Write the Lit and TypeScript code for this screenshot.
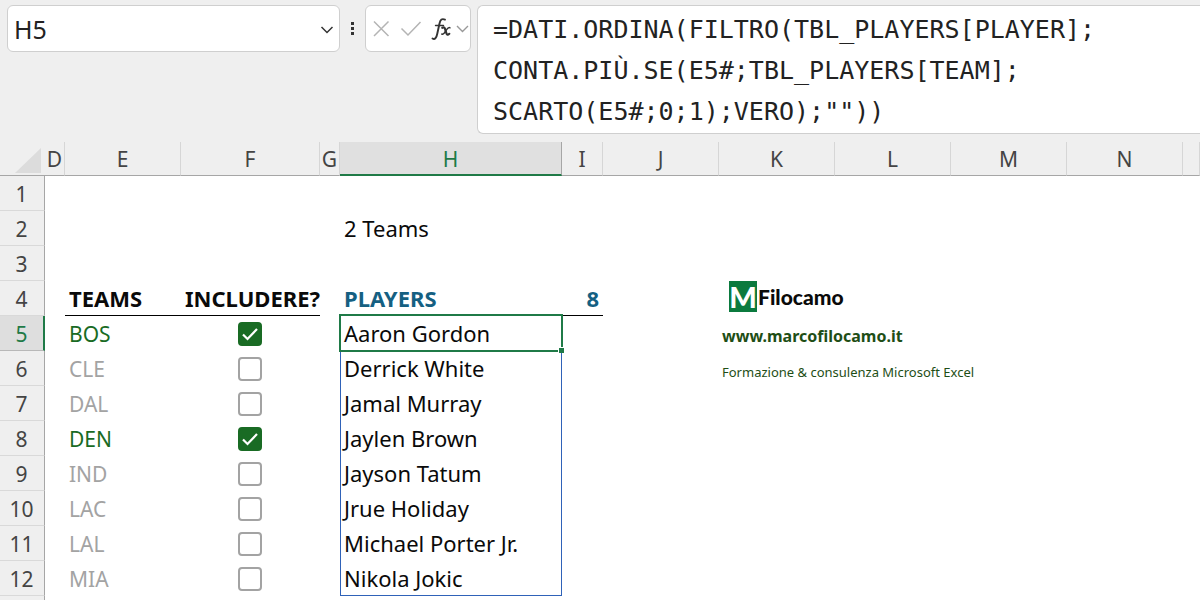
import { LitElement, html, css, nothing } from "lit";
import { customElement, state } from "lit/decorators.js";

interface Team {
  code: string;
  included: boolean;
}

const COLUMNS = ["D", "E", "F", "G", "H", "I", "J", "K", "L", "M", "N", ""];
const ROWS = [1, 2, 3, 4, 5, 6, 7, 8, 9, 10, 11, 12];
const FIRST_DATA_ROW = 5;

const PLAYERS = [
  "Aaron Gordon",
  "Derrick White",
  "Jamal Murray",
  "Jaylen Brown",
  "Jayson Tatum",
  "Jrue Holiday",
  "Michael Porter Jr.",
  "Nikola Jokic",
];

const FORMULA = `=DATI.ORDINA(FILTRO(TBL_PLAYERS[PLAYER];
CONTA.PIÙ.SE(E5#;TBL_PLAYERS[TEAM];
SCARTO(E5#;0;1);VERO);""))`;

@customElement("formula-bar")
class FormulaBar extends LitElement {
  static styles = css`
    :host {
      display: flex;
      align-items: flex-start;
      padding: 5px 0 8px 7px;
      background: #efefef;
      color: #222;
    }
    .box {
      display: flex;
      align-items: center;
      box-sizing: border-box;
      height: 47px;
      background: #fff;
      border: 1px solid #cfcfcf;
      border-radius: 6px;
    }
    .name {
      flex: 0 0 333px;
      min-width: 0;
    }
    .name-input {
      flex: 1;
      min-width: 0;
      padding: 0 0 0 6px;
      border: 0;
      outline: 0;
      background: none;
      color: inherit;
      font: 25px/32px "Noto Sans", sans-serif;
    }
    button {
      display: flex;
      padding: 0;
      border: 0;
      background: none;
    }
    .name button {
      padding: 0 4px;
    }
    .grip {
      flex: none;
      margin: 17px 10px 0;
    }
    .actions {
      flex: none;
      margin-right: 6px;
    }
    .formula {
      flex: 1;
      min-width: 0;
      box-sizing: border-box;
      height: 129px;
      padding: 3px 0 0 15px;
      border: 1px solid #cfcfcf;
      border-right: 0;
      border-radius: 6px 0 0 6px;
      outline: 0;
      resize: none;
      overflow: hidden;
      background: #fff;
      color: #222;
      white-space: pre;
      font: 25px/41px "DejaVu Sans Mono", monospace;
    }
  `;

  render() {
    return html`
      <div class="box name">
        <input class="name-input" aria-label="Casella nome" value="H5" />
        <button aria-label="Apri elenco nomi">
          <svg width="16" height="16" viewBox="0 0 16 16" fill="none" stroke="#333" stroke-width="1.5">
            <path d="M2.5 6 8 11.5 13.500 6" />
          </svg>
        </button>
      </div>
      <svg class="grip" width="5" height="16" viewBox="0 0 5 16" fill="#333">
        <path d="M1 0h3v3H1zM1 5h3v3H1zM1 10h3v3H1z" />
      </svg>
      <div class="box actions">
        <button aria-label="Annulla">
          <svg width="30" height="24" viewBox="0 0 30 24" fill="none" stroke="#b4b4b4" stroke-width="1.5">
            <path d="M8 4.500 22.500 19M22.500 4.500 8 19" />
          </svg>
        </button>
        <button aria-label="Invio">
          <svg width="30" height="24" viewBox="0 0 30 24" fill="none" stroke="#b4b4b4" stroke-width="1.5">
            <path d="M5.500 11.500 12 18 24.500 5" />
          </svg>
        </button>
        <button aria-label="Inserisci funzione">
          <svg width="28" height="26" viewBox="0 0 28 26" fill="none" stroke="#333" stroke-linecap="round">
            <path stroke-width="1.900" d="M6.500 22.500C9 24 10.500 21.500 11.200 18L13.500 7.500C14.300 3.500 16 2.300 19 3.600" />
            <path stroke-width="1.400" d="M9.500 9.500h8" />
            <path stroke-width="2.200" d="M16.300 11.800c2-1 2.600 0 3.200 2.700l.8 2.500c.6 2 1.500 2.200 3 .8" />
            <path stroke-width="1.500" d="M24 11.800c-1.500-.8-2.700.5-4.200 3s-2.500 4-4 3.200" />
          </svg>
        </button>
        <button aria-label="Altre funzioni">
          <svg width="16" height="16" viewBox="0 0 16 16" fill="none" stroke="#999" stroke-width="1.400">
            <path d="M3 5 8.500 10.500 14 5" />
          </svg>
        </button>
      </div>
      <textarea class="formula" aria-label="Barra della formula" spellcheck="false" .value=${FORMULA}></textarea>
    `;
  }
}

@customElement("brand-card")
class BrandCard extends LitElement {
  static styles = css`
    :host {
      display: flex;
      flex-direction: column;
      align-items: flex-start;
      gap: 10px;
      padding-left: 3px;
      color: #1e4e16;
      white-space: nowrap;
    }
    .logo {
      display: flex;
      align-items: center;
      gap: 1px;
      margin-left: 7px;
      color: #0a0a0a;
      font: 900 21px/31px Lato, sans-serif;
    }
    .mark {
      width: 28px;
      height: 31px;
      background: #0b7a3e;
      color: #fff;
      text-align: center;
      font-size: 29px;
    }
    .site {
      color: inherit;
      text-decoration: none;
      font: 700 16px/28px "Noto Sans", sans-serif;
    }
    .tagline {
      font: 13px/24px "Noto Sans", sans-serif;
    }
  `;

  render() {
    return html`
      <div class="logo"><span class="mark">M</span><span>Filocamo</span></div>
      <a class="site" href="#">www.marcofilocamo.it</a>
      <span class="tagline">Formazione &amp; consulenza Microsoft Excel</span>
    `;
  }
}

@customElement("sheet-grid")
class SheetGrid extends LitElement {
  static styles = css`
    :host {
      display: block;
      overflow: hidden;
    }
    table {
      width: 100%;
      table-layout: fixed;
      border-collapse: separate;
      border-spacing: 0;
      background: #fff;
      color: #0a0a0a;
      font: 22px/34px "Noto Sans", sans-serif;
    }
    th,
    td {
      box-sizing: border-box;
      height: 35px;
      padding: 0;
      text-align: left;
      white-space: nowrap;
    }
    .w-head { width: 45px; }
    .w-d { width: 20px; }
    .w-e { width: 116px; }
    .w-f { width: 139px; }
    .w-g { width: 20px; }
    .w-h { width: 222px; }
    .w-i { width: 41px; }
    .w-wide { width: 116px; }
    .col,
    .corner {
      height: 34px;
      background: #efefef;
      border-bottom: 1px solid #a6a6a6;
      line-height: 32px;
    }
    .col {
      border-right: 1px solid #d6d6d6;
      color: #444;
      text-align: center;
      font-size: 21px;
      font-weight: 400;
    }
    .col.active {
      padding-top: 2px;
      background: #e0e0e0;
      border-bottom: 2px solid #1f7a47;
      border-right-color: #a6a6a6;
      color: #1f7a47;
      line-height: 30px;
    }
    .triangle {
      display: block;
      margin: 4px 0 0 15px;
    }
    .row {
      padding: 2px 1px 0 0;
      background: #efefef;
      border-right: 1px solid #a6a6a6;
      border-bottom: 1px solid #d9d9d9;
      color: #444;
      text-align: center;
      font-size: 21px;
      font-weight: 400;
      line-height: 32px;
    }
    .row.active {
      background: #dedede;
      border-right: 2px solid #1f7a47;
      border-bottom-color: #b8b8b8;
      color: #1f7a47;
      padding-right: 0;
    }
    .text {
      padding-left: 4px;
    }
    .summary {
      padding-bottom: 1px;
    }
    .title {
      border-bottom: 1px solid #000;
      font-weight: 700;
    }
    .result {
      color: #156082;
    }
    .count {
      padding-right: 4px;
      text-align: right;
    }
    .team {
      color: #a3a3a3;
      font-size: 21px;
    }
    .team.on {
      color: #196b24;
    }
    .check {
      display: grid;
      place-content: center;
      padding-right: 2px;
    }
    .check > * {
      grid-area: 1 / 1;
    }
    input {
      appearance: none;
      box-sizing: border-box;
      width: 24px;
      height: 24px;
      margin: 0;
      border: 2px solid #a3a3a3;
      border-radius: 4px;
      background: #fff;
    }
    input:checked {
      border-color: #196b24;
      background: #196b24;
    }
    .check svg {
      pointer-events: none;
    }
    .spill {
      border-left: 1px solid #2f62b8;
      border-right: 1px solid #2f62b8;
      padding: 0 0 1px 3px;
    }
    .spill.last {
      border-bottom: 1px solid #2f62b8;
      padding-bottom: 0;
    }
    .selected {
      position: relative;
    }
    .cursor {
      position: absolute;
      inset: -2px -2px -1px;
      border: 2px solid #1f7a47;
      pointer-events: none;
    }
    .handle {
      position: absolute;
      right: -3px;
      bottom: -3px;
      width: 5px;
      height: 5px;
      border: 1px solid #fff;
      border-width: 1px 0 0 1px;
      background: #1f7a47;
    }
    .brand {
      vertical-align: top;
    }
  `;

  @state() private teams: Team[] = ["BOS", "CLE", "DAL", "DEN", "IND", "LAC", "LAL", "MIA"].map((code) => ({
    code,
    included: code === "BOS" || code === "DEN",
  }));

  private toggle(index: number) {
    this.teams = this.teams.map((t, i) => (i === index ? { ...t, included: !t.included } : t));
  }

  private renderTitles() {
    return html`
      <td></td>
      <td class="text title">TEAMS</td>
      <td class="text title">INCLUDERE?</td>
      <td></td>
      <td class="text title result">PLAYERS</td>
      <td class="title result count">${PLAYERS.length}</td>
      <td></td>
      <td class="brand" colspan="3" rowspan="3"><brand-card></brand-card></td>
      <td colspan="2"></td>
    `;
  }

  private renderData(index: number) {
    const team = this.teams[index];
    const first = index === 0;
    const last = index === PLAYERS.length - 1;
    return html`
      <td></td>
      <td class="text team ${team.included ? "on" : ""}">${team.code}</td>
      <td>
        <label class="check">
          <input
            type="checkbox"
            aria-label="Includere ${team.code}"
            .checked=${team.included}
            @change=${() => this.toggle(index)}
          />
          ${team.included
            ? html`<svg width="24" height="24" viewBox="0 0 24 24" fill="none" stroke="#fff" stroke-width="2.200">
                <path d="M5 12.500 9.500 17 19 7" />
              </svg>`
            : nothing}
        </label>
      </td>
      <td></td>
      <td class="spill ${first ? "selected" : ""} ${last ? "last" : ""}">
        ${PLAYERS[index]}${first ? html`<div class="cursor"><div class="handle"></div></div>` : nothing}
      </td>
      <td colspan="2"></td>
      ${index < 2 ? nothing : html`<td colspan="3"></td>`}
      <td colspan="2"></td>
    `;
  }

  private renderCells(row: number) {
    if (row === 2) {
      return html`<td colspan="4"></td><td class="text summary">${this.teams.filter((t) => t.included).length} Teams</td><td colspan="7"></td>`;
    }
    if (row === FIRST_DATA_ROW - 1) return this.renderTitles();
    const index = row - FIRST_DATA_ROW;
    if (index >= 0 && index < this.teams.length) return this.renderData(index);
    return html`<td colspan="12"></td>`;
  }

  render() {
    return html`
      <table>
        <colgroup>
          <col class="w-head" /><col class="w-d" /><col class="w-e" /><col class="w-f" /><col class="w-g" />
          <col class="w-h" /><col class="w-i" /><col class="w-wide" span="5" /><col />
        </colgroup>
        <thead>
          <tr>
            <td class="corner">
              <svg class="triangle" width="27" height="25" viewBox="0 0 27 25">
                <path d="M26 0v25H0z" fill="#dcdcdc" />
              </svg>
            </td>
            ${COLUMNS.map((c) => html`<th class="col ${c === "H" ? "active" : ""}" scope="col">${c}</th>`)}
          </tr>
        </thead>
        <tbody>
          ${ROWS.map(
            (r) => html`<tr>
              <th class="row ${r === FIRST_DATA_ROW ? "active" : ""}" scope="row">${r}</th>
              ${this.renderCells(r)}
            </tr>`
          )}
          <tr>
            <td class="row"></td>
            <td colspan="12"></td>
          </tr>
        </tbody>
      </table>
    `;
  }
}

@customElement("app-root")
class AppRoot extends LitElement {
  static styles = css`
    :host {
      display: block;
      height: 100vh;
      overflow: hidden;
      background: #fff;
    }
  `;

  render() {
    return html`<formula-bar></formula-bar><sheet-grid></sheet-grid>`;
  }
}
